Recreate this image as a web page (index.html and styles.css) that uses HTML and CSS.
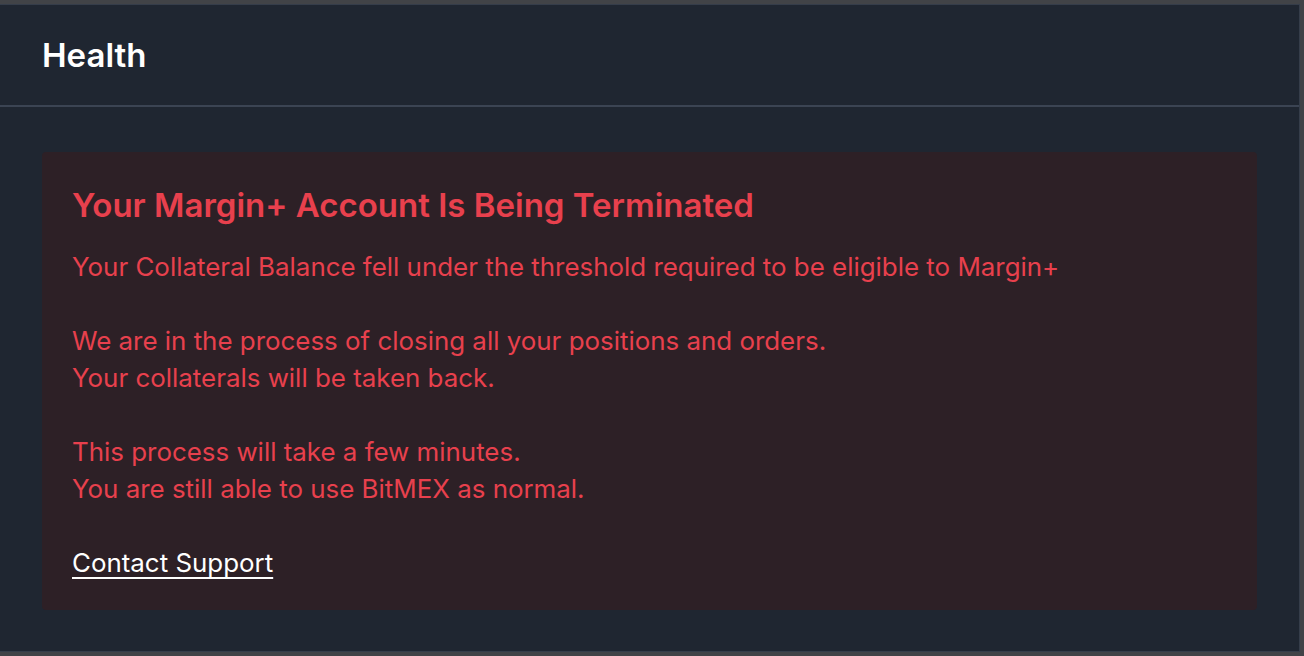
FILE: index.html
```html
<!DOCTYPE html>
<html>
<head>
<meta charset="utf-8">
<link rel="stylesheet" href="styles.css">
</head>
<body>
<div class="frame">
  <section class="panel">
    <header class="panel-head">
      <h1 class="panel-title">Health</h1>
    </header>
    <div class="panel-body">
      <div class="alert">
        <h2 class="alert-title">Your Margin+ Account Is Being Terminated</h2>
        <p class="alert-text">Your Collateral Balance fell under the threshold required to be eligible to Margin+</p>
        <p class="alert-text">We are in the process of closing all your positions and orders.<br>Your collaterals will be taken back.</p>
        <p class="alert-text">This process will take a few minutes.<br>You are still able to use BitMEX as normal.</p>
        <p class="alert-text"><a class="alert-link" href="#">Contact Support</a></p>
      </div>
    </div>
  </section>
</div>
</body>
</html>
```
FILE: styles.css
```css
html, body {
  margin: 0;
  padding: 0;
}
body {
  background: #414347;
  font-family: Inter, "Noto Sans", sans-serif;
  width: 1304px;
  height: 656px;
  overflow: hidden;
}
.frame {
  padding: 4px 4px 4px 0;
  height: 656px;
  box-sizing: border-box;
}
.panel {
  background: #1f2631;
  border: 1px solid #353d4a;
  border-left: none;
  height: 100%;
  box-sizing: border-box;
}
.panel-head {
  height: 102px;
  border-bottom: 2px solid #3b4453;
  display: flex;
  align-items: center;
  padding-left: 42px;
  box-sizing: border-box;
}
.panel-title {
  margin: 0;
  color: #ffffff;
  font-size: 33px;
  font-weight: 600;
  line-height: 40px;
}
.panel-body {
  padding: 45px 42px 0 42px;
}
.alert {
  background: #2d2026;
  border-radius: 4px;
  padding: 33px 30px 32px;
  height: 458px;
  box-sizing: border-box;
}
.alert-title {
  margin: 0 0 23px;
  color: #e8404d;
  font-size: 33px;
  font-weight: 600;
  line-height: 40px;
}
.alert-text {
  margin: 0 0 37px;
  color: #e8404d;
  font-size: 25.9px;
  line-height: 37px;
}
.alert-link {
  color: #ffffff;
  text-decoration: underline;
  text-underline-offset: 5px;
  text-decoration-thickness: 2px;
}
```
